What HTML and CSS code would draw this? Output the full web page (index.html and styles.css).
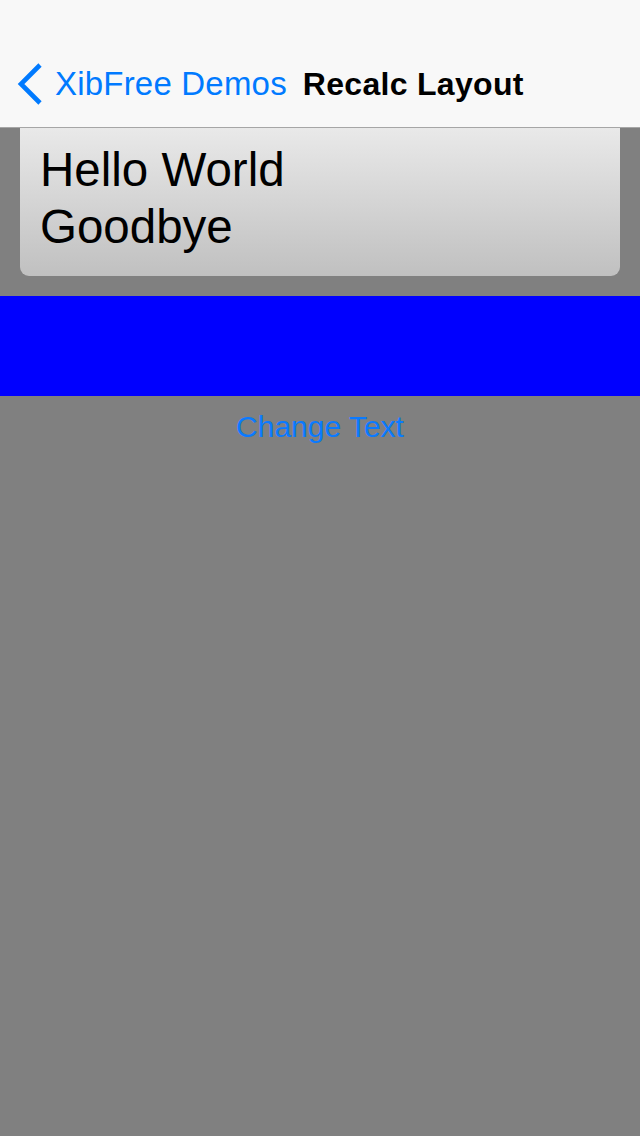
FILE: index.html
```html
<!DOCTYPE html>
<html>
<head>
<meta charset="utf-8">
<link rel="stylesheet" href="styles.css">
</head>
<body>
<div class="screen">
  <header class="navbar">
    <div class="nav-row">
      <svg class="chevron" width="28" height="44" viewBox="0 0 28 44"><polyline points="24,3 5,22 24,41" fill="none" stroke="#007aff" stroke-width="4.6" stroke-linecap="butt" stroke-linejoin="miter"/></svg>
      <span class="back-label">XibFree Demos</span>
      <span class="nav-title">Recalc Layout</span>
    </div>
  </header>
  <div class="card">
    <div class="card-text">Hello World<br>Goodbye</div>
  </div>
  <div class="blue-bar"></div>
  <div class="button-row"><span class="change-btn">Change Text</span></div>
</div>
</body>
</html>
```

FILE: styles.css
```css
html, body {
  margin: 0;
  padding: 0;
}
body {
  background: #808080;
  font-family: "Liberation Sans", Arial, sans-serif;
}
.screen {
  width: 640px;
  height: 1136px;
  background: #808080;
  overflow: hidden;
}
.navbar {
  height: 128px;
  padding-top: 40px;
  box-sizing: border-box;
  background: #f8f8f8;
  border-bottom: 1px solid #a6a6a6;
}
.nav-row {
  height: 87px;
  display: flex;
  align-items: center;
  padding-left: 16px;
}
.chevron {
  display: block;
  margin-right: 11px;
}
.back-label {
  font-size: 33px;
  line-height: 36px;
  color: #007aff;
  letter-spacing: 0.2px;
}
.nav-title {
  margin-left: 16px;
  font-size: 32px;
  line-height: 36px;
  font-weight: bold;
  color: #000;
  letter-spacing: 0.3px;
}
.card {
  margin: 0 20px;
  padding: 13px 20px 21px;
  background: linear-gradient(to bottom, #e9e9e9, #c0c0c0);
  border-radius: 0 0 9px 9px;
}
.card-text {
  font-size: 47.5px;
  line-height: 57px;
  color: #000;
}
.blue-bar {
  margin-top: 20px;
  height: 100px;
  background: #0000ff;
}
.button-row {
  display: flex;
  justify-content: center;
  height: 60px;
  line-height: 62px;
}
.change-btn {
  font-size: 30px;
  color: #0a7aff;
}
```
